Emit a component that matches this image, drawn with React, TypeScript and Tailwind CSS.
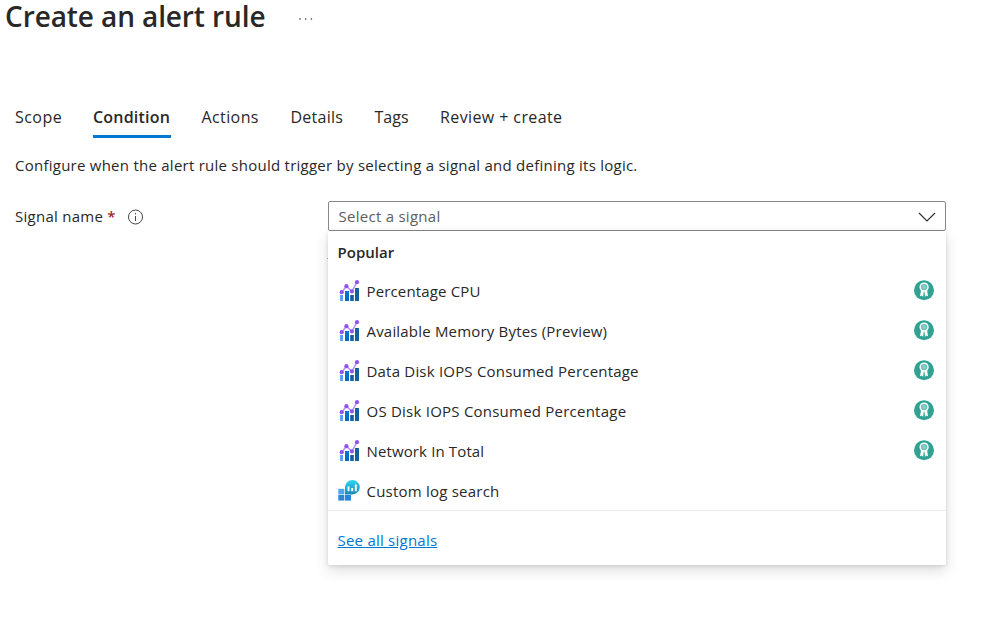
import React from "react";

const tabs = [
  { label: "Scope", className: "w-[47px] tracking-[0.45px]" },
  { label: "Condition", className: "w-[78px] font-semibold tracking-[0.2px]", active: true },
  { label: "Actions", className: "w-[58px] -ml-[0.5px] tracking-[0.4px]" },
  { label: "Details", className: "w-[53px] tracking-[0.25px]" },
  { label: "Tags", className: "w-[34.5px]" },
  { label: "Review + create", className: "w-[123px] tracking-[0.4px]" },
];

const signals = [
  { label: "Percentage CPU", className: "tracking-[0.15px]" },
  { label: "Available Memory Bytes (Preview)", className: "tracking-[0.19px]" },
  { label: "Data Disk IOPS Consumed Percentage", className: "tracking-[0.2px]" },
  { label: "OS Disk IOPS Consumed Percentage", className: "tracking-[0.23px]" },
  { label: "Network In Total", className: "tracking-[0.13px]" },
];

function MetricIcon() {
  return (
    <svg width="22" height="24" viewBox="0 0 22 24" className="shrink-0">
      <defs>
        <linearGradient id="bar" x1="0" y1="0" x2="0" y2="1">
          <stop offset="0" stopColor="#0078d4" />
          <stop offset="1" stopColor="#0669b8" />
        </linearGradient>
      </defs>
      <rect x="2" y="16" width="3" height="6" fill="#5ea0ef" />
      <rect x="7" y="12" width="4" height="10" fill="url(#bar)" />
      <rect x="12.2" y="16" width="3.6" height="6" fill="#155f9f" />
      <rect x="17" y="9" width="4" height="13" fill="#155f9f" />
      <path d="M3.7 13.4 8.4 7.2 13.9 12.4 19 3.2" fill="none" stroke="#b796f2" strokeWidth="1.6" />
      <g fill="#8f55e6">
        <circle cx="3.7" cy="13.2" r="2.1" />
        <circle cx="8.4" cy="7.2" r="2.1" />
        <circle cx="13.9" cy="12.4" r="2.1" />
        <circle cx="19" cy="3.2" r="2.1" />
      </g>
    </svg>
  );
}

function LogIcon() {
  return (
    <svg width="22" height="24" viewBox="0 0 22 24" className="shrink-0">
      <defs>
        <linearGradient id="drop" x1="0" y1="0" x2="0" y2="1">
          <stop offset="0" stopColor="#32d4f5" />
          <stop offset="1" stopColor="#198ab3" />
        </linearGradient>
      </defs>
      <rect x="0.3" y="9.8" width="6" height="5.6" fill="#50a5ef" />
      <rect x="0.3" y="16" width="6" height="5.6" fill="#2b88d8" />
      <rect x="7" y="16" width="6" height="5.6" fill="#2486dc" />
      <path d="M7 15.4V8a7.4 7.2 0 1 1 7.4 7.4Z" fill="url(#drop)" />
      <path d="M10.5 7.4v4.8M14.2 9v3.2M17.8 5.6v6.6" stroke="#fff" strokeWidth="1.9" />
    </svg>
  );
}

function AwardIcon() {
  return (
    <svg width="20" height="21" viewBox="0 0 20 21" className="mb-px shrink-0">
      <circle cx="10" cy="10.3" r="10" fill="#2fa294" />
      <path d="M7 10.4 6 16.2l2-.6 1.1 1.5.9-4.4.9 4.4 1.2-1.5 2 .6-1-5.8Z" fill="#fff" />
      <circle cx="10.1" cy="7.1" r="3.9" fill="#5fbab0" stroke="#fff" strokeWidth="1.5" />
      <circle cx="10.1" cy="7.1" r="2.1" fill="#8fd0c8" />
      <path d="M10.1 11.8v5" stroke="#2fa294" strokeWidth="1" />
    </svg>
  );
}

export default function App() {
  return (
    <div className="flex h-[621px] w-[1000px] flex-col overflow-hidden bg-white font-['Open_Sans','Noto_Sans',sans-serif] text-[15px] text-[#292827]">
      <header className="flex h-[34px] items-center pl-[5px]">
        <h1 className="w-[293px] pb-[2px] text-[28px] leading-[32px] font-semibold tracking-[-0.1px] whitespace-nowrap">Create an alert rule</h1>
        <svg className="mt-[3px]" width="16" height="4" viewBox="0 0 16 4" fill="#333">
          <circle cx="2" cy="2" r="0.8" /><circle cx="7.7" cy="2" r="0.8" /><circle cx="13.4" cy="2" r="0.8" />
        </svg>
      </header>
      <nav className="mt-[68px] ml-[15px] flex h-9 gap-[31px] text-base">
        {tabs.map((t) => (
          <button key={t.label} className={`${t.className} ${t.active ? "border-b-3 border-[#0078d4]" : "border-b-3 border-transparent"} h-9 pb-[2px] text-left leading-[29px] whitespace-nowrap`}>
            {t.label}
          </button>
        ))}
      </nav>
      <p className="mt-4 ml-[15px] leading-[22px] tracking-[0.25px] whitespace-nowrap">Configure when the alert rule should trigger by selecting a signal and defining its logic.</p>
      <div className="mt-[25px] ml-[15px] flex">
        <div className="flex h-[30px] w-[313px] items-center whitespace-nowrap">
          <span className="tracking-[0.27px]">Signal name</span>
          <span className="ml-[4px] font-semibold text-[#a4262c]">*</span>
          <svg className="mt-px ml-[12px]" width="17" height="16" viewBox="0 0 17 16" fill="none" stroke="#444">
            <circle cx="8.5" cy="8" r="7" /><path d="M8.5 7v5M8.5 4v1.4" />
          </svg>
        </div>
        <div className="relative w-[618px]">
          <span className="absolute top-[57px] -left-px h-px w-px bg-[#9a9a9a]" />
          <div className="flex h-[30px] items-center justify-between rounded-xs border border-[#8a8886] pr-[9px] pl-[9.5px] text-[#605e5c]">
            <span className="tracking-[0.27px]">Select a signal</span>
            <svg className="mt-px" width="18" height="10" viewBox="0 0 18 10" fill="none" stroke="#323130" strokeWidth="1.2"><path d="m1 1 8 8 8-8" /></svg>
          </div>
          <div className="h-[334px] rounded-b-xs bg-white shadow-[0_6px_14px_rgba(0,0,0,0.13),0_1px_4px_rgba(0,0,0,0.12)]">
            <div className="flex h-10 items-center pt-[2px] pl-[9.5px] font-semibold">Popular</div>
            {signals.map((s) => (
              <div key={s.label} className="flex h-10 items-center pr-3 pl-[10px]">
                <MetricIcon />
                <span className={`${s.className} ml-[6.5px] flex-1 whitespace-nowrap`}>{s.label}</span>
                <AwardIcon />
              </div>
            ))}
            <div className="flex h-[40px] items-center border-b border-[#edebe9] pl-[10px]">
              <LogIcon />
              <span className="ml-[6.5px] pt-px tracking-[0.22px]">Custom log search</span>
            </div>
            <div className="flex h-[58px] items-center pl-[9.5px]">
              <a className="tracking-[0.23px] text-[#0078d4] underline">See all signals</a>
            </div>
          </div>
        </div>
      </div>
    </div>
  );
}
